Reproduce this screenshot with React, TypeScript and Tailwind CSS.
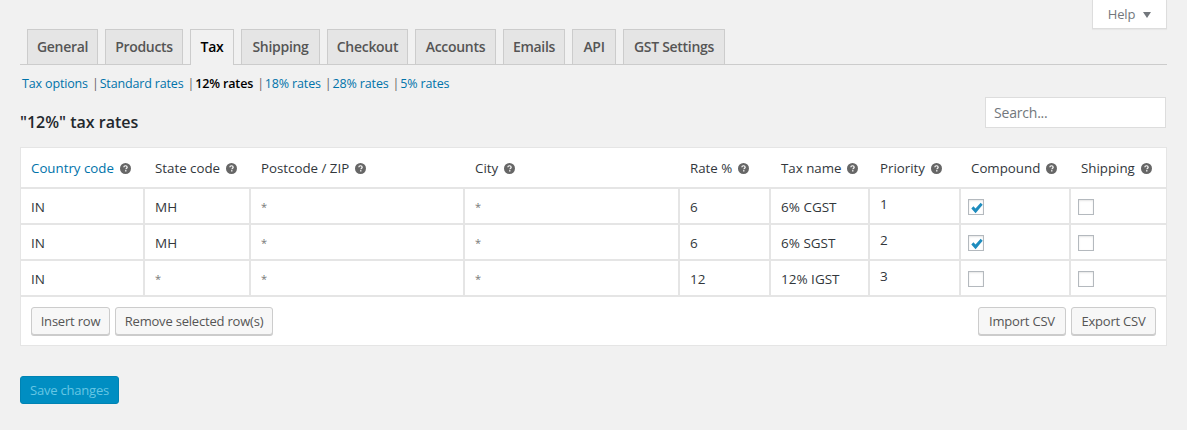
import { FC } from 'react';

const tabs = [
    { label: 'General', width: 'w-[71px]' },
    { label: 'Products', width: 'w-[78px]' },
    { label: 'Tax', width: 'w-[44px]', active: true },
    { label: 'Shipping', width: 'w-[79px]' },
    { label: 'Checkout', width: 'w-[81px]' },
    { label: 'Accounts', width: 'w-[81px]' },
    { label: 'Emails', width: 'w-[62px]' },
    { label: 'API', width: 'w-[44px]' },
    { label: 'GST Settings', width: 'w-[102px]' },
];

const links = ['Tax options', 'Standard rates', '12% rates', '18% rates', '28% rates', '5% rates'];

const columns = [
    { label: 'Country code', width: 'w-[123px]', link: true },
    { label: 'State code', width: 'w-[106px]' },
    { label: 'Postcode / ZIP', width: 'w-[214px]' },
    { label: 'City', width: 'w-[215px]' },
    { label: 'Rate %', width: 'w-[91px]' },
    { label: 'Tax name', width: 'w-[99px]' },
    { label: 'Priority', width: 'w-[91px]' },
    { label: 'Compound', width: 'w-[110px]' },
    { label: 'Shipping', width: '' },
];

const rows = [
    { country: 'IN', state: 'MH', zip: '*', city: '*', rate: '6', name: '6% CGST', priority: '1', compound: true },
    { country: 'IN', state: 'MH', zip: '*', city: '*', rate: '6', name: '6% SGST', priority: '2', compound: true },
    { country: 'IN', state: '*', zip: '*', city: '*', rate: '12', name: '12% IGST', priority: '3', compound: false },
];

const HelpTip: FC = () => (
    <svg viewBox="0 0 20 20" className="inline-block w-[11px] h-[11px] ml-[6px] align-[-1px]">
        <circle cx="10" cy="10" r="10" fill="#666" />
        <path
            d="M7 7.6C7 5.9 8.3 5 10 5s3 .9 3 2.5c0 2.2-2.4 2.2-2.4 4"
            fill="none"
            stroke="#fff"
            strokeWidth="2.2"
        />
        <rect x="9.3" y="13" width="2.4" height="2.4" fill="#fff" />
    </svg>
);

const Checkbox: FC<{ checked?: boolean }> = ({ checked }) => (
    <span className="relative block w-4 h-4 mt-[2px] bg-white border border-[#b4b9be] shadow-[inset_0_1px_2px_rgba(0,0,0,0.1)]">
        {checked && (
            <svg viewBox="0 0 16 16" className="absolute left-[1px] top-[1px] w-[14px] h-[14px]">
                <path d="M1.5 8.5l2.4-2.4 2.4 2.6L12.2 2l2.3 2.2L6.4 14z" fill="#1e8cbe" />
            </svg>
        )}
    </span>
);

const Button: FC<{ label: string; width: string }> = ({ label, width }) => (
    <button
        type="button"
        className={`${width} h-[28px] bg-[#f7f7f7] border border-[#cccccc] rounded-[3px] shadow-[0_1px_0_#cccccc] text-[13px] text-[#555555] leading-[26px]`}
    >
        {label}
    </button>
);

const cellClass = 'h-[36px] border-r-2 border-b-2 border-[#e5e5e5] pl-[10px] pt-[2px] text-[13.5px] text-[#32373c] align-middle';

// the wildcard cells show a smaller, greyer star than the other values
const Value: FC<{ text: string }> = ({ text }) =>
    text === '*' ? <span className="relative -top-[1px] text-[11px] text-[#777777]">*</span> : <>{text}</>;

const App: FC = () => {
    return (
        <div className="relative w-[1187px] h-[430px] overflow-hidden bg-[#f1f1f1] font-['Open_Sans','Noto_Sans',sans-serif] text-[13px] tracking-[-0.2px] text-[#444444]">
            <div className="absolute right-[20px] top-0 w-[75px] h-[29px] pt-[1px] bg-white border border-t-0 border-[#dddddd] shadow-[0_1px_1px_rgba(0,0,0,0.04)] flex items-center justify-center gap-[8px] text-[#72777c]">
                <span>Help</span>
                <span className="w-0 h-0 border-x-[4px] border-x-transparent border-t-[6px] border-t-[#72777c]" />
            </div>

            <div className="pl-[20px] pr-[20px] pt-[29px]">
                <nav className="flex h-[36px] gap-[7px] pl-[7px] border-b border-[#cccccc]">
                    {tabs.map((tab) => (
                        <div
                            key={tab.label}
                            className={
                                tab.active
                                    ? `${tab.width} h-[36px] pb-[2px] flex items-center justify-center border border-[#cccccc] border-b-0 bg-[#f1f1f1] text-[14px] tracking-[-0.3px] font-semibold text-black`
                                    : `${tab.width} h-[35px] pb-[1px] flex items-center justify-center border border-[#cccccc] border-b-0 bg-[#e5e5e5] text-[14px] tracking-[-0.3px] font-semibold text-[#555555]`
                            }
                        >
                            {tab.label}
                        </div>
                    ))}
                </nav>

                <div className="flex items-center h-[20px] mt-[9px] pl-[2px] text-[12.5px] tracking-[-0.15px]">
                    {links.map((link, i) => (
                        <span key={link} className="flex items-center">
                            {i > 0 && <span className="text-[#666666] ml-[4px] mr-[1px]">|</span>}
                            <span className={link === '12% rates' ? 'font-semibold text-black' : 'text-[#0073aa]'}>
                                {link}
                            </span>
                        </span>
                    ))}
                </div>

                <div className="flex items-start justify-between h-[50px] mt-[3px]">
                    <h2 className="mt-[15px] text-[16px] leading-[20px] tracking-normal font-semibold text-[#23282d]">
                        "12%" tax rates
                    </h2>
                    <input
                        placeholder="Search..."
                        className="w-[181px] h-[31px] mr-[1px] px-[8px] bg-white border border-[#dddddd] text-[14px] placeholder:text-[#72777c]"
                    />
                </div>

                <div className="bg-white border border-[#e5e5e5] tracking-normal">
                    <table className="w-full table-fixed border-collapse">
                        <thead>
                            <tr>
                                {columns.map((col) => (
                                    <th
                                        key={col.label}
                                        className={`${col.width} h-[40px] border-b-2 border-[#e5e5e5] pt-[2px] text-left text-[13.3px] font-normal whitespace-nowrap ${col.link ? 'pl-[10px] text-[#0073aa]' : 'pl-[11px] text-[#32373c]'}`}
                                    >
                                        {col.label}
                                        <HelpTip />
                                    </th>
                                ))}
                            </tr>
                        </thead>
                        <tbody>
                            {rows.map((row) => (
                                <tr key={row.name}>
                                    <td className={cellClass}>{row.country}</td>
                                    <td className={cellClass}>
                                        <Value text={row.state} />
                                    </td>
                                    <td className={cellClass}>
                                        <Value text={row.zip} />
                                    </td>
                                    <td className={cellClass}>
                                        <Value text={row.city} />
                                    </td>
                                    <td className={cellClass}>{row.rate}</td>
                                    <td className={cellClass}>{row.name}</td>
                                    <td className="h-[36px] border-r-2 border-b-2 border-[#e5e5e5] pl-[10px] pt-[5px] text-[13.5px] text-[#32373c] align-top">
                                        {row.priority}
                                    </td>
                                    <td className="h-[36px] border-r-2 border-b-2 border-[#e5e5e5] pl-[7px] align-middle">
                                        <Checkbox checked={row.compound} />
                                    </td>
                                    <td className="h-[36px] border-b-2 border-[#e5e5e5] pl-[7px] align-middle">
                                        <Checkbox />
                                    </td>
                                </tr>
                            ))}
                        </tbody>
                    </table>
                    <div className="flex items-center justify-between h-[48px] px-[10px] tracking-[-0.2px]">
                        <div className="flex gap-[5px]">
                            <Button label="Insert row" width="w-[79px]" />
                            <Button label="Remove selected row(s)" width="w-[158px]" />
                        </div>
                        <div className="flex gap-[5px]">
                            <Button label="Import CSV" width="w-[88px]" />
                            <Button label="Export CSV" width="w-[85px]" />
                        </div>
                    </div>
                </div>

                <button
                    type="button"
                    className="block mt-[30px] w-[99px] h-[28px] pt-[1px] bg-[#008ec2] border border-[#0083b3] rounded-[3px] text-[13px] text-[#66c6e4]"
                >
                    Save changes
                </button>
            </div>
        </div>
    );
};

export default App;
